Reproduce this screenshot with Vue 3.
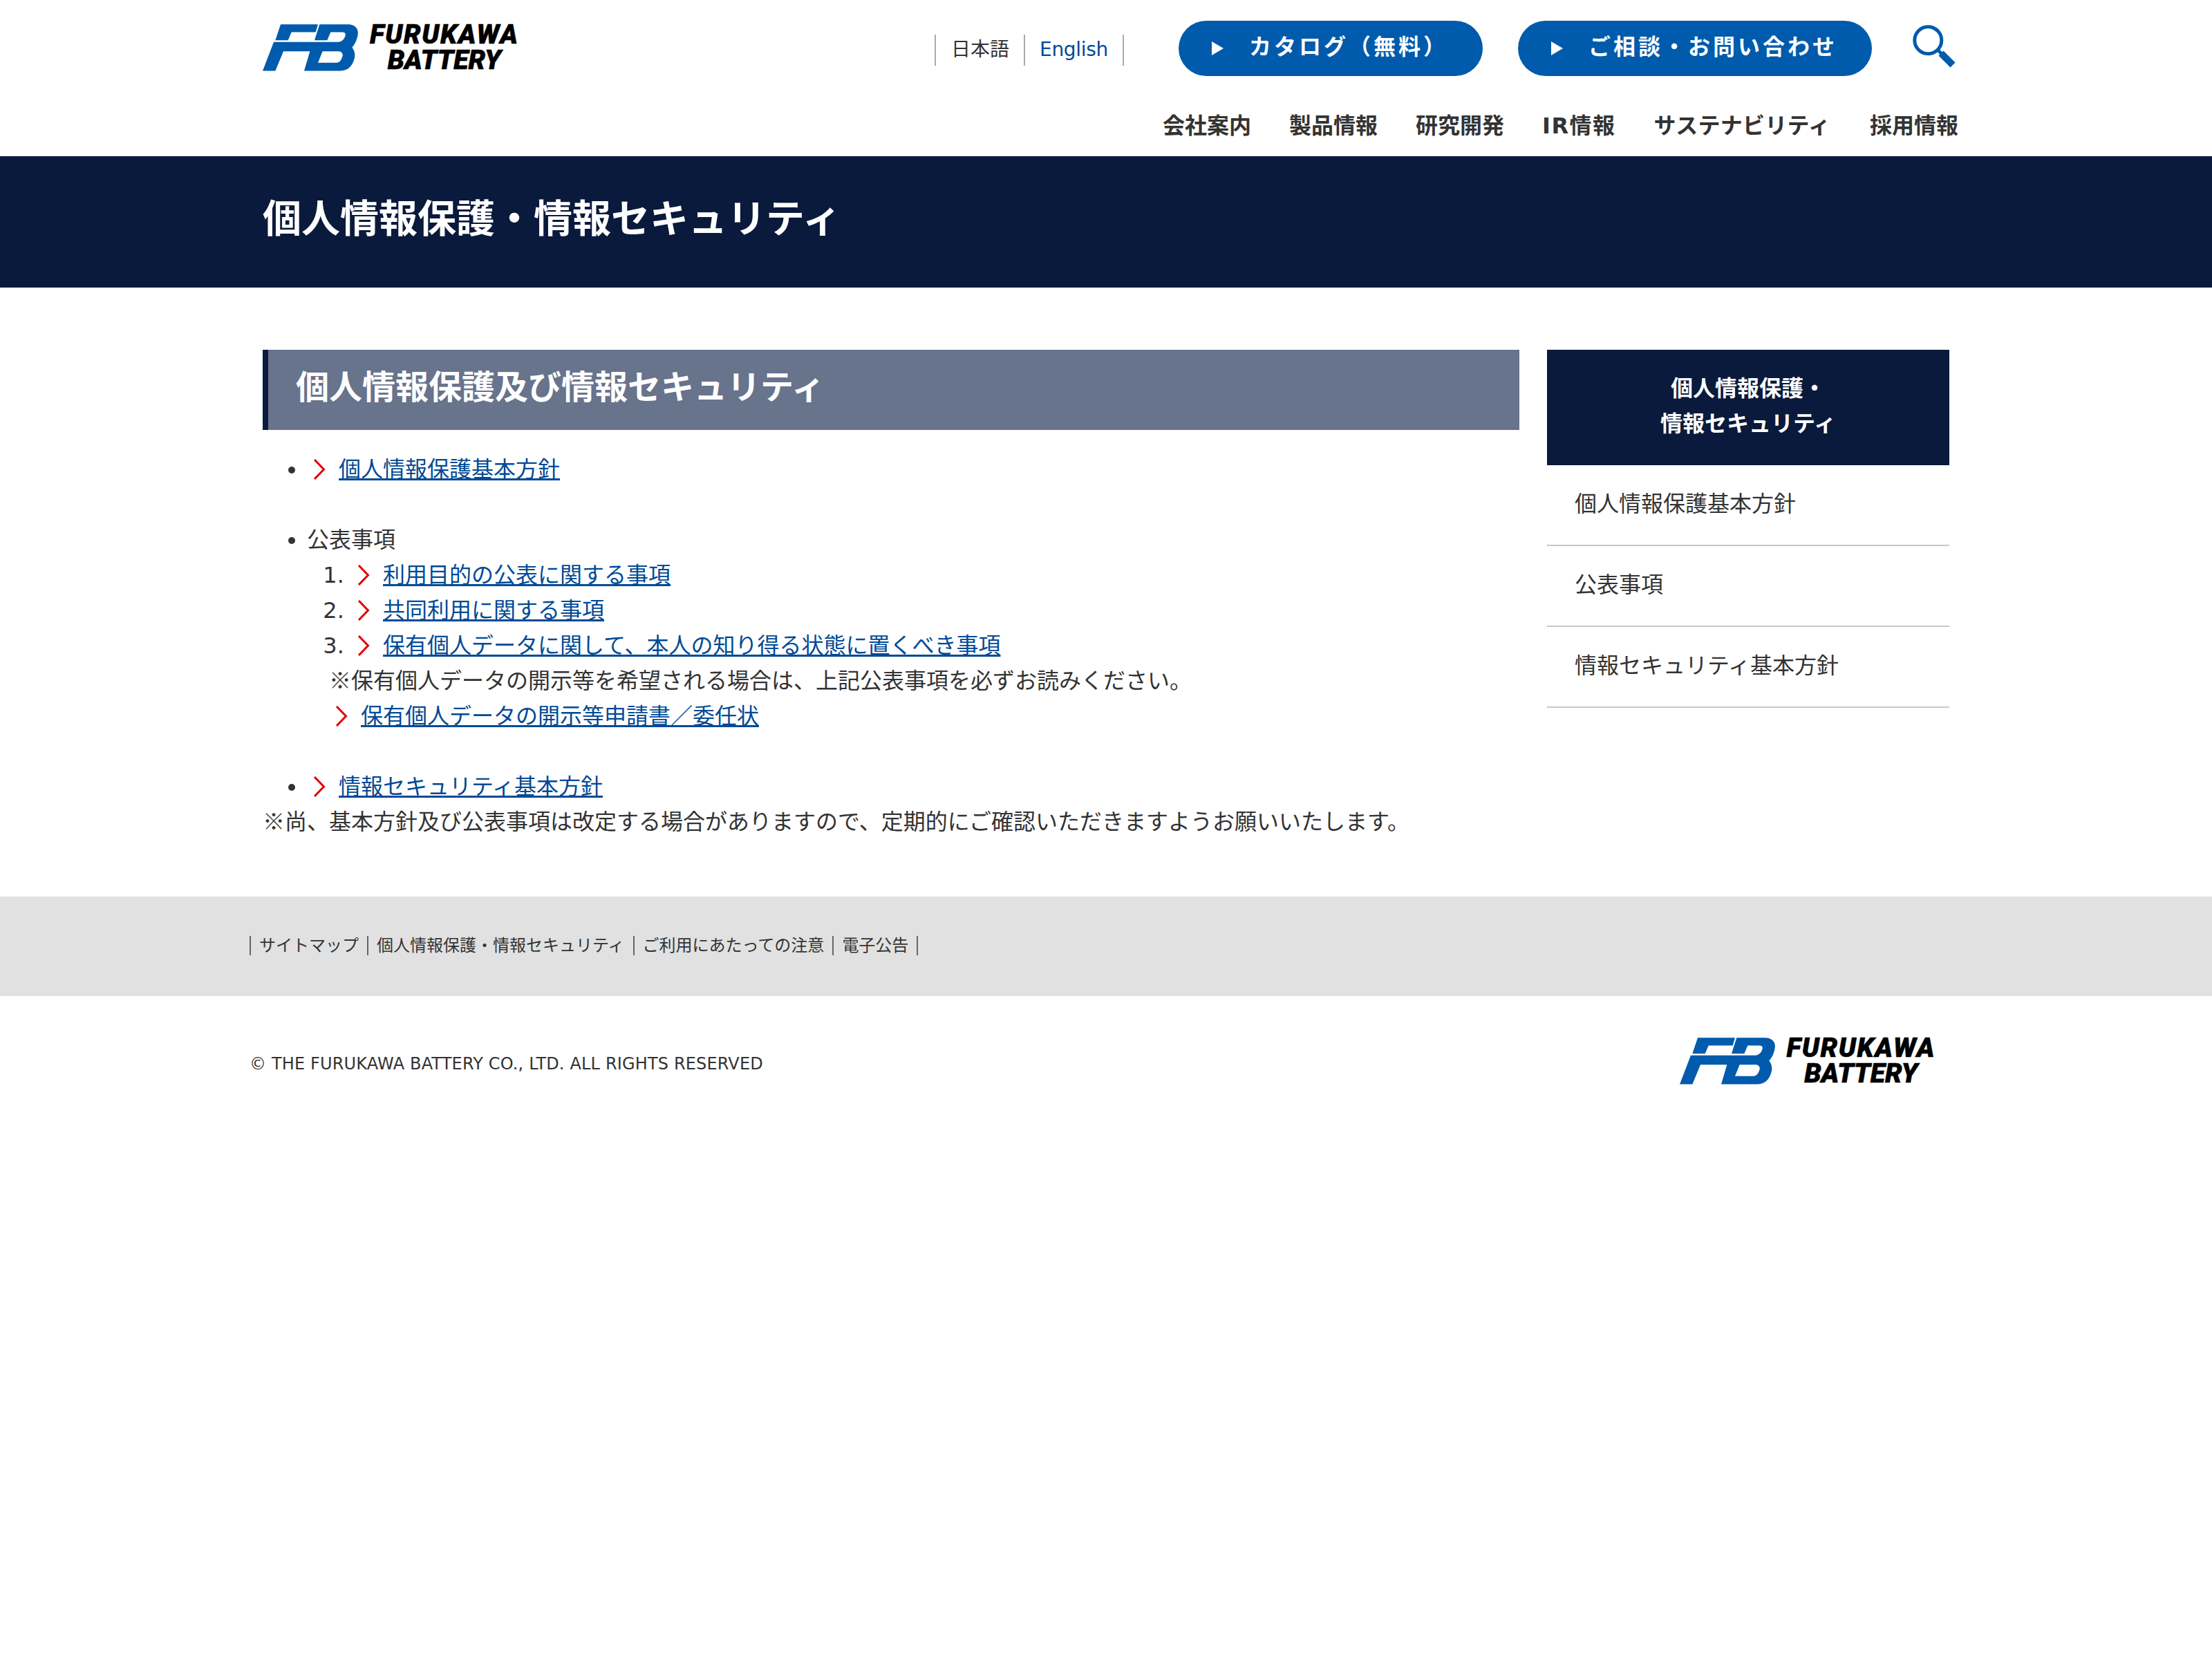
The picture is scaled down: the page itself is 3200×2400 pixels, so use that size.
<template>
  <div class="page">
    <header class="site-header">
      <div class="top-row">
        <a class="logo" href="#">
          <svg class="logo-mark" viewBox="15 18 417 203">
            <path d="M93 18H255L245 52H140L125 87H70Z" />
            <path fill-rule="evenodd" d="M262 18H385C418 18 432 40 428 62C425 85 415 105 403 118C415 135 418 150 412 170C402 205 380 220 350 220H195L220 135H105L70 220H15L63 95H335C355 95 365 88 372 72C378 58 372 52 360 52H310L295 87H240ZM275 135L255 185H335C350 185 358 170 362 155C364 143 355 135 345 135Z" />
          </svg>
          <span class="logo-text">FURUKAWA<span class="logo-line2">BATTERY</span></span>
        </a>
        <div class="top-right">
          <ul class="lang">
            <li>日本語</li>
            <li><a href="#">English</a></li>
          </ul>
          <a class="cta cta-catalog" href="#">カタログ（無料）</a>
          <a class="cta cta-contact" href="#">ご相談・お問い合わせ</a>
          <svg class="search" viewBox="16 10 64 64">
            <circle cx="39.3" cy="33.3" r="19.5" fill="none" stroke="#005bac" stroke-width="5" />
            <path d="M54 48L59 53" stroke="#005bac" stroke-width="5" />
            <path d="M58 52L75 69" stroke="#005bac" stroke-width="10" />
          </svg>
        </div>
      </div>
      <nav class="global-nav">
        <a v-for="item in navItems" :key="item" href="#">{{ item }}</a>
      </nav>
    </header>

    <div class="title-band">
      <h1>個人情報保護・情報セキュリティ</h1>
    </div>

    <div class="content">
      <main class="main-col">
        <h2>個人情報保護及び情報セキュリティ</h2>
        <ul class="policy-list">
          <li>
            <svg class="chevron" viewBox="0 0 18 30"><path d="M2 1L15.5 15L2 29" /></svg><a href="#">個人情報保護基本方針</a>
          </li>
          <li>
            公表事項
            <ol>
              <li>
                <svg class="chevron" viewBox="0 0 18 30"><path d="M2 1L15.5 15L2 29" /></svg><a href="#">利用目的の公表に関する事項</a>
              </li>
              <li>
                <svg class="chevron" viewBox="0 0 18 30"><path d="M2 1L15.5 15L2 29" /></svg><a href="#">共同利用に関する事項</a>
              </li>
              <li>
                <svg class="chevron" viewBox="0 0 18 30"><path d="M2 1L15.5 15L2 29" /></svg><a href="#">保有個人データに関して、本人の知り得る状態に置くべき事項</a>
                <div class="note"><span class="kome">※</span>保有個人データの開示等を希望される場合は、上記公表事項を必ずお読みください。</div>
                <div class="note">
                  <svg class="chevron" viewBox="0 0 18 30"><path d="M2 1L15.5 15L2 29" /></svg><a href="#">保有個人データの開示等申請書／委任状</a>
                </div>
              </li>
            </ol>
          </li>
          <li>
            <svg class="chevron" viewBox="0 0 18 30"><path d="M2 1L15.5 15L2 29" /></svg><a href="#">情報セキュリティ基本方針</a>
          </li>
        </ul>
        <p class="closing"><span class="kome">※</span>尚、基本方針及び公表事項は改定する場合がありますので、定期的にご確認いただきますようお願いいたします。</p>
      </main>

      <aside class="side-col">
        <div class="side-title">個人情報保護・<br />情報セキュリティ</div>
        <a v-for="item in sideItems" :key="item" class="side-item" href="#">{{ item }}</a>
      </aside>
    </div>

    <div class="footer-links">
      <a v-for="item in footerItems" :key="item" href="#">{{ item }}</a>
    </div>

    <footer class="footer-bottom">
      <span class="copyright">© THE FURUKAWA BATTERY CO., LTD. ALL RIGHTS RESERVED</span>
      <a class="logo" href="#">
        <svg class="logo-mark" viewBox="15 18 417 203">
          <path d="M93 18H255L245 52H140L125 87H70Z" />
          <path fill-rule="evenodd" d="M262 18H385C418 18 432 40 428 62C425 85 415 105 403 118C415 135 418 150 412 170C402 205 380 220 350 220H195L220 135H105L70 220H15L63 95H335C355 95 365 88 372 72C378 58 372 52 360 52H310L295 87H240ZM275 135L255 185H335C350 185 358 170 362 155C364 143 355 135 345 135Z" />
        </svg>
        <span class="logo-text">FURUKAWA<span class="logo-line2">BATTERY</span></span>
      </a>
    </footer>
  </div>
</template>

<script setup>
const navItems = ['会社案内', '製品情報', '研究開発', 'IR情報', 'サステナビリティ', '採用情報']
const sideItems = ['個人情報保護基本方針', '公表事項', '情報セキュリティ基本方針']
const footerItems = ['サイトマップ', '個人情報保護・情報セキュリティ', 'ご利用にあたっての注意', '電子公告']
</script>

<style>
body {
  background: #fff;
}
</style>

<style scoped>
.page {
  width: 3200px;
  font-family: "DejaVu Sans", "Noto Sans CJK JP", sans-serif;
  font-size: 32px;
  line-height: 51px;
  color: #333;
}

a {
  color: inherit;
  text-decoration: none;
}

.site-header {
  height: 226px;
  box-sizing: border-box;
  padding: 30px 367px 0 380px;
}

.top-row {
  display: flex;
  justify-content: space-between;
  align-items: flex-start;
  padding-right: 3px;
}

.logo {
  display: flex;
  align-items: center;
  gap: 16px;
  margin-top: 2px;
}

.logo-mark {
  width: 139px;
  height: 68px;
  fill: #005bac;
}

.logo-text {
  font-family: Roboto, "Liberation Sans", sans-serif;
  font-size: 39px;
  font-weight: 900;
  font-style: italic;
  line-height: 37px;
  letter-spacing: 1.6px;
  -webkit-text-stroke: 0.6px #000;
  color: #000;
  text-align: center;
}

.logo-line2 {
  display: block;
  letter-spacing: -0.1px;
}

.top-right {
  display: flex;
  align-items: flex-start;
}

.lang {
  display: flex;
  list-style: none;
  margin: 20px 79px 0 0;
  padding: 0;
  font-size: 28px;
  line-height: 43px;
  border-right: 2px solid #aaa;
}

.lang li {
  padding: 0 21px 2px 22px;
  border-left: 2px solid #aaa;
}

.lang li:last-child {
  padding-left: 21px;
}

.lang a {
  color: #004a96;
  letter-spacing: -0.3px;
}

.cta {
  display: flex;
  align-items: center;
  height: 80px;
  box-sizing: border-box;
  padding: 0 0 4px 102px;
  border-radius: 40px;
  background: #005bac;
  color: #fff;
  font-weight: 700;
  letter-spacing: 4px;
  position: relative;
}

.cta::before {
  content: "";
  position: absolute;
  left: 48px;
  top: 30px;
  border-left: 17px solid #fff;
  border-top: 10px solid transparent;
  border-bottom: 10px solid transparent;
}

.cta-catalog {
  width: 440px;
  margin-right: 51px;
}

.cta-contact {
  width: 512px;
}

.search {
  width: 64px;
  height: 64px;
  margin: 5px 0 0 58px;
}

.global-nav {
  display: flex;
  justify-content: flex-end;
  gap: 55px;
  margin-top: 47px;
  font-weight: 700;
}

.global-nav a:nth-child(4) {
  letter-spacing: 1.5px;
}

.global-nav a:nth-child(5) {
  letter-spacing: 0.25px;
}

.global-nav a:nth-child(6) {
  margin-left: 2px;
}

.title-band {
  height: 190px;
  box-sizing: border-box;
  display: flex;
  align-items: center;
  padding: 0 0 8px 380px;
  background: #0a1a3c;
}

.title-band h1 {
  margin: 0;
  font-size: 56px;
  line-height: 80px;
  font-weight: 700;
  color: #fff;
}

.content {
  display: flex;
  gap: 40px;
  padding: 90px 0 82px 380px;
}

.main-col {
  width: 1818px;
}

.main-col h2 {
  margin: 0 0 32px;
  height: 116px;
  box-sizing: border-box;
  padding-left: 40px;
  border-left: 8px solid #0a1a3c;
  background: #68738c;
  color: #fff;
  font-size: 48px;
  line-height: 108px;
  font-weight: 700;
}

.policy-list {
  margin: 0;
  padding: 0 0 0 64px;
}

.policy-list > li {
  margin-bottom: 51px;
}

.policy-list > li:last-child {
  margin-bottom: 0;
}

.policy-list ol {
  margin: 0;
  padding-left: 64px;
}

.policy-list a {
  color: #004a96;
  text-decoration: underline;
  text-decoration-thickness: 3px;
}

.chevron {
  width: 18px;
  height: 30px;
  margin: 0 19px 0 9px;
  vertical-align: -4px;
  fill: none;
  stroke: #e00000;
  stroke-width: 3;
}

.note {
  margin-left: -32px;
}

.kome {
  font-family: "Noto Sans CJK JP", sans-serif;
  line-height: 0;
}

.closing {
  margin: 0;
}

.side-col {
  width: 582px;
}

.side-title {
  height: 167px;
  box-sizing: border-box;
  padding-top: 31px;
  background: #0a1a3c;
  color: #fff;
  font-weight: 700;
  text-align: center;
}

.side-item {
  display: block;
  height: 117px;
  box-sizing: border-box;
  padding: 31px 0 0 40px;
  border-bottom: 2px solid #c8c8c8;
}

.footer-links {
  height: 144px;
  box-sizing: border-box;
  display: flex;
  align-items: center;
  padding: 0 0 2px 361px;
  background: #e1e1e1;
  font-size: 24px;
  line-height: 28px;
}

.footer-links a {
  padding: 0 12px;
  border-left: 2px solid #666;
}

.footer-links a:last-child {
  border-right: 2px solid #666;
}

.footer-bottom {
  display: flex;
  justify-content: space-between;
  align-items: center;
  padding: 55px 400px 0 361px;
}

.copyright {
  font-size: 24px;
  letter-spacing: 0.16px;
  margin-top: 10px;
}
</style>
